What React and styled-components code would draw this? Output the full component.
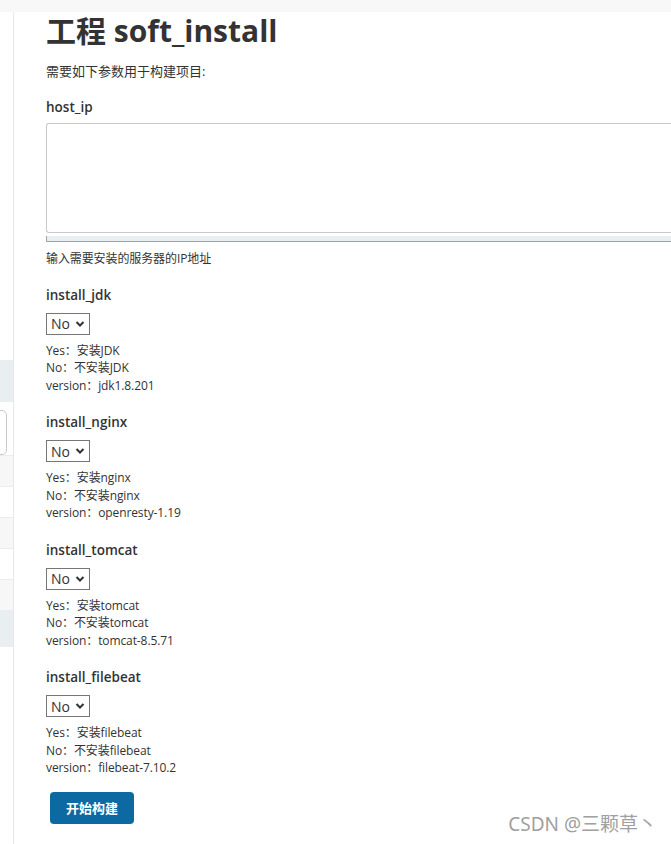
import React from "react";
import styled, { createGlobalStyle } from "styled-components";

const GlobalStyle = createGlobalStyle`
  html, body {
    margin: 0;
    padding: 0;
    background: #ffffff;
    overflow: hidden;
  }
  body {
    font-family: "Open Sans", "Noto Sans", "Noto Sans CJK SC", sans-serif;
    color: #333333;
  }
`;

const TopBar = styled.div`
  height: 12px;
  background: #f8f8f8;
`;

const Layout = styled.div`
  display: flex;
  min-height: 832px;
`;

const Sidebar = styled.div`
  width: 13px;
  flex-shrink: 0;
  border-right: 1px solid #e8e8e8;
  display: flex;
  flex-direction: column;
  overflow: hidden;
`;

const SideSpace = styled.div`
  height: ${(p) => p.h}px;
`;

const SideBand = styled.div`
  height: ${(p) => p.h}px;
  background: #e9eef1;
`;

const SideSearch = styled.div`
  height: 43px;
  width: 48px;
  margin-left: -43px;
  border: 1px solid #c9c9c9;
  border-radius: 5px;
  flex-shrink: 0;
`;

const SideRow = styled.div`
  height: 30px;
  border-top: 1px solid #ececec;
  background: ${(p) => (p.shaded ? "#f7f7f7" : "#ffffff")};
`;

const Main = styled.div`
  flex: 1;
  min-width: 0;
  padding-left: 32px;
`;

const Title = styled.h1`
  margin: 0;
  font-size: 30px;
  line-height: 38px;
  font-weight: 700;
  color: #333333;
  white-space: nowrap;
`;

const Intro = styled.p`
  margin: 12px 0 0;
  font-size: 13px;
  line-height: 18px;
`;

const Param = styled.div`
  margin-top: ${(p) => p.top}px;
`;

const ParamName = styled.div`
  font-size: 13.5px;
  font-weight: 600;
  line-height: 18px;
  color: #333333;
`;

const TextArea = styled.textarea`
  display: block;
  box-sizing: border-box;
  width: 100%;
  height: 110px;
  margin-top: 7px;
  border: 1px solid #c8c8c8;
  border-right: none;
  border-radius: 3px 0 0 3px;
  resize: none;
  font: inherit;
  outline: none;
`;

const ResizeBar = styled.div`
  box-sizing: border-box;
  width: 100%;
  height: 6px;
  margin-top: 3px;
  background: #e9eef1;
  border-left: 1px solid #9aa4aa;
  border-bottom: 1px solid #9aa4aa;
`;

const Help = styled.div`
  margin-top: ${(p) => p.top || 0}px;
  font-size: 12px;
  line-height: 17.5px;
  letter-spacing: -0.1px;
  color: #333333;
`;

const SelectWrap = styled.label`
  display: inline-flex;
  align-items: center;
  box-sizing: border-box;
  height: 22px;
  width: 44px;
  margin: 9px 0 7px;
  padding: 0 4px 0 4px;
  border: 1px solid #767676;
  background: #ffffff;
  gap: 2px;
`;

const Select = styled.select`
  appearance: none;
  border: none;
  outline: none;
  background: transparent;
  padding: 0;
  margin: 0;
  font-family: "Open Sans", "Noto Sans", sans-serif;
  font-size: 14px;
  color: #333333;
  width: 22px;
`;

const BuildButton = styled.button`
  display: block;
  margin: 15px 0 0 4px;
  width: 84px;
  height: 32px;
  border: none;
  border-radius: 4px;
  background: #0d69a1;
  color: #ffffff;
  font-family: "Noto Sans CJK SC", sans-serif;
  font-size: 13px;
  font-weight: 700;
`;

const Watermark = styled.div`
  position: absolute;
  right: 14px;
  bottom: 7px;
  font-family: "Noto Sans", "Noto Sans CJK SC", sans-serif;
  font-size: 19px;
  color: #a0a0a0;
  text-shadow: 0 0 2px #ffffff;
`;

const Chevron = () => (
  <svg width="10" height="10" viewBox="0 0 10 10">
    <path d="M1.5 3 L5 6.5 L8.5 3" fill="none" stroke="#333" strokeWidth="2" />
  </svg>
);

const params = [
  {
    name: "install_jdk",
    top: 18,
    lines: ["Yes：安装JDK", "No：不安装JDK", "version：jdk1.8.201"],
  },
  {
    name: "install_nginx",
    top: 19,
    lines: ["Yes：安装nginx", "No：不安装nginx", "version：openresty-1.19"],
  },
  {
    name: "install_tomcat",
    top: 19,
    lines: ["Yes：安装tomcat", "No：不安装tomcat", "version：tomcat-8.5.71"],
  },
  {
    name: "install_filebeat",
    top: 19,
    lines: ["Yes：安装filebeat", "No：不安装filebeat", "version：filebeat-7.10.2"],
  },
];

export default function App() {
  return (
    <>
      <GlobalStyle />
      <TopBar />
      <Layout>
        <Sidebar>
          <SideSpace h={348} />
          <SideBand h={42} />
          <SideSpace h={8} />
          <SideSearch />
          <SideRow shaded />
          <SideRow />
          <SideRow shaded />
          <SideRow />
          <SideRow shaded />
          <SideBand h={37} />
        </Sidebar>
        <Main>
          <Title>工程 soft_install</Title>
          <Intro>需要如下参数用于构建项目:</Intro>
          <Param top={18}>
            <ParamName>host_ip</ParamName>
            <TextArea />
            <ResizeBar />
            <Help top={8}>输入需要安装的服务器的IP地址</Help>
          </Param>
          {params.map((p) => (
            <Param key={p.name} top={p.top}>
              <ParamName>{p.name}</ParamName>
              <SelectWrap>
                <Select defaultValue="No">
                  <option>No</option>
                  <option>Yes</option>
                </Select>
                <Chevron />
              </SelectWrap>
              {p.lines.map((l) => (
                <Help key={l}>{l}</Help>
              ))}
            </Param>
          ))}
          <BuildButton>开始构建</BuildButton>
        </Main>
      </Layout>
      <Watermark>CSDN @三颗草丶</Watermark>
    </>
  );
}
